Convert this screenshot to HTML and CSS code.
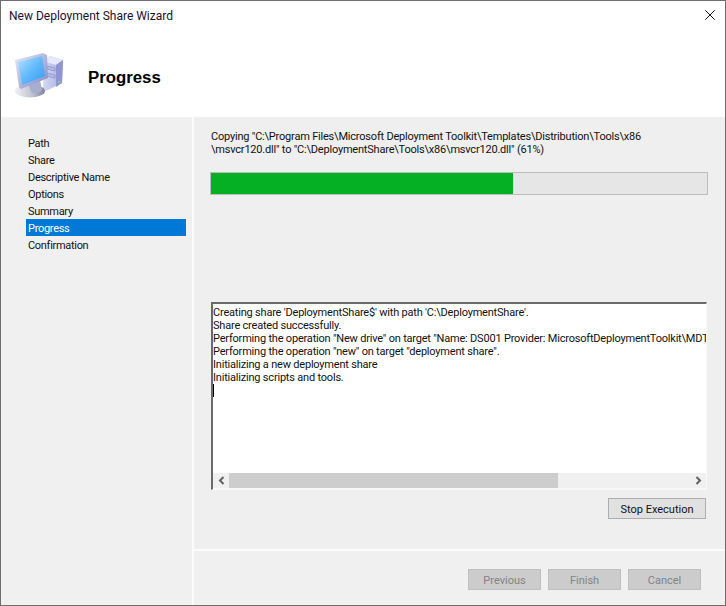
FILE: index.html
```html
<!DOCTYPE html>
<html lang="en">
<head>
<meta charset="utf-8">
<title>New Deployment Share Wizard</title>
<link rel="stylesheet" href="styles.css">
</head>
<body>
<div class="window">
  <header class="head">
    <div class="titlebar">
      <span class="title">New Deployment Share Wizard</span>
      <svg class="close" width="10" height="10" viewBox="0 0 10 10"><path d="M.3.3l9.4 9.4M9.7.3L.3 9.7" stroke="#111" stroke-width="1" fill="none"/></svg>
    </div>
    <div class="banner">
      <svg class="pc" width="52" height="50" viewBox="0 0 52 50">
        <defs>
          <linearGradient id="scr" x1="0" y1="0" x2="1" y2="1"><stop offset="0" stop-color="#b6e3ff"/><stop offset=".5" stop-color="#62bafa"/><stop offset="1" stop-color="#3596f0"/></linearGradient>
          <linearGradient id="case" x1="0" y1="0" x2="1" y2="0"><stop offset="0" stop-color="#d5d9f3"/><stop offset="1" stop-color="#a7ade0"/></linearGradient>
          <linearGradient id="bez" x1="0" y1="0" x2="1" y2="1"><stop offset="0" stop-color="#e8ebf9"/><stop offset="1" stop-color="#7f86c6"/></linearGradient>
          <linearGradient id="base" x1="0" y1="0" x2="1" y2="0"><stop offset="0" stop-color="#f0f1f4"/><stop offset=".6" stop-color="#bcc0cf"/><stop offset="1" stop-color="#7f829a"/></linearGradient>
        </defs>
        <path d="M30 10l6-4 13 4-1 23-16 8-3-2z" fill="url(#case)"/>
        <path d="M36 6l13 4-7 5-13-4z" fill="#e6e9fa"/>
        <path d="M42 15l7-5-1 23-6 4z" fill="#8f95d2"/>
        <path d="M33 16l8 2v3l-8-2zM33 23l8 2v3l-8-2z" fill="#b6bae6" stroke="#7f85c2" stroke-width=".6"/>
        <circle cx="45" cy="32" r="1" fill="#79e079"/>
        <ellipse cx="16" cy="41" rx="15" ry="6.5" fill="url(#base)"/>
        <path d="M14 33l12-3 2 10c-3 4-9 4-11 2z" fill="#a9aecf"/>
        <path d="M1 10L29 3l4 2 1 23-27 11-2-2z" fill="url(#bez)"/>
        <path d="M4 12l24-6 3 20-23 9z" fill="url(#scr)"/>
      </svg>
      <h1 class="heading">Progress</h1>
    </div>
  </header>
  <div class="main">
    <nav class="steps">
      <div class="step">Path</div>
      <div class="step">Share</div>
      <div class="step">Descriptive Name</div>
      <div class="step">Options</div>
      <div class="step">Summary</div>
      <div class="step current">Progress</div>
      <div class="step">Confirmation</div>
    </nav>
    <div class="content">
      <section class="work">
        <p class="status">Copying "C:\Program Files\Microsoft Deployment Toolkit\Templates\Distribution\Tools\x86<br>\msvcr120.dll" to "C:\DeploymentShare\Tools\x86\msvcr120.dll" (61%)</p>
        <div class="bar"><div class="fill" style="width:60.8%"></div></div>
        <div class="log">
          <div class="log-text">
            <div>Creating share 'DeploymentShare$' with path 'C:\DeploymentShare'.</div>
            <div>Share created successfully.</div>
            <div>Performing the operation "New drive" on target "Name: DS001 Provider: MicrosoftDeploymentToolkit\MDTProvider Root: C:\DeploymentShare".</div>
            <div>Performing the operation "new" on target "deployment share".</div>
            <div>Initializing a new deployment share</div>
            <div>Initializing scripts and tools.</div>
            <span class="caret"></span>
          </div>
          <div class="scroll">
            <svg class="arrow" width="7" height="9" viewBox="0 0 7 9"><path d="M5.5 1L2 4.5 5.5 8" stroke="#606060" stroke-width="2" fill="none"/></svg>
            <div class="track"><div class="thumb"></div></div>
            <svg class="arrow" width="7" height="9" viewBox="0 0 7 9"><path d="M1.5 1L5 4.5 1.5 8" stroke="#606060" stroke-width="2" fill="none"/></svg>
          </div>
        </div>
        <div class="stop-row"><button class="btn stop">Stop Execution</button></div>
      </section>
      <footer class="foot">
        <button class="btn off">Previous</button>
        <button class="btn off">Finish</button>
        <button class="btn off">Cancel</button>
      </footer>
    </div>
  </div>
</div>
</body>
</html>
```
FILE: styles.css
```css
* { box-sizing: border-box; }
html, body { margin: 0; padding: 0; }
body { width: 726px; height: 606px; overflow: hidden; font-family: Roboto, "Liberation Sans", sans-serif; font-size: 11px; letter-spacing: -0.2px; color: #111; }
.window { width: 726px; height: 606px; display: flex; flex-direction: column; background: #f0f0f0; border: 1px solid #6d6d6d; }
.head { height: 116px; background: #fff; flex: none; }
.titlebar { height: 30px; display: flex; justify-content: space-between; align-items: center; padding: 0 10px 0 8px; }
.title { font-size: 12px; letter-spacing: 0; color: #1a1030; }
.close { display: block; margin-bottom: 2px; }
.banner { display: flex; align-items: center; padding: 19px 0 0 13px; }
.pc { display: block; flex: none; }
.heading { margin: 6px 0 0 22px; font-family: "Liberation Sans", sans-serif; font-size: 16.8px; letter-spacing: 0; font-weight: 700; color: #000; }
.main { flex: 1; display: flex; min-height: 0; }
.steps { width: 193px; flex: none; border-right: 2px solid #fbfbfb; padding: 17px 6px 0 25px; letter-spacing: -0.3px; }
.step { height: 17px; line-height: 19px; padding-left: 2px; }
.current { background: #0078d7; color: #fff; }
.content { flex: 1; display: flex; flex-direction: column; min-width: 0; }
.work { height: 434px; flex: none; padding: 13px 17px 0 17px; border-bottom: 2px solid #fbfbfb; background: #efefef; }
.status { margin: 0; line-height: 13px; white-space: nowrap; }
.bar { margin-top: 16px; height: 23px; width: 498px; margin-left: -1px; background: #e6e6e6; border: 1px solid #bcbcbc; }
.fill { height: 100%; background: #06b025; }
.log { margin-top: 107px; width: 496px; height: 188px; background: #fff; border: 1px solid #f8f8f8; border-top: 2px solid #6a6a6a; border-left: 2px solid #6a6a6a; display: flex; flex-direction: column; }
.log-text { flex: 1; padding: 2px 0 0 0; line-height: 13px; white-space: nowrap; overflow: hidden; min-height: 0; }
.caret { display: block; width: 1px; height: 13px; background: #000; }
.scroll { height: 16px; flex: none; display: flex; align-items: flex-start; background: #f0f0f0; border-bottom: 1px solid #f8f8f8; }
.arrow { display: block; flex: none; margin: 3px 4.5px 0; }
.track { flex: 1; height: 15px; }
.thumb { width: 329px; height: 100%; background: #cdcdcd; }
.stop-row { display: flex; justify-content: flex-end; margin-top: 8px; width: 495px; }
.btn { font: 11px Roboto, "Liberation Sans", sans-serif; height: 21px; padding: 1px 0 0; }
.stop { width: 98px; background: #e1e1e1; border: 1px solid #adadad; color: #111; }
.foot { flex: 1; display: flex; gap: 7px; padding: 18px 0 0 274px; background: #f0f0f0; }
.off { width: 73px; background: #cccccc; border: 1px solid #bfbfbf; color: #838383; }
```
